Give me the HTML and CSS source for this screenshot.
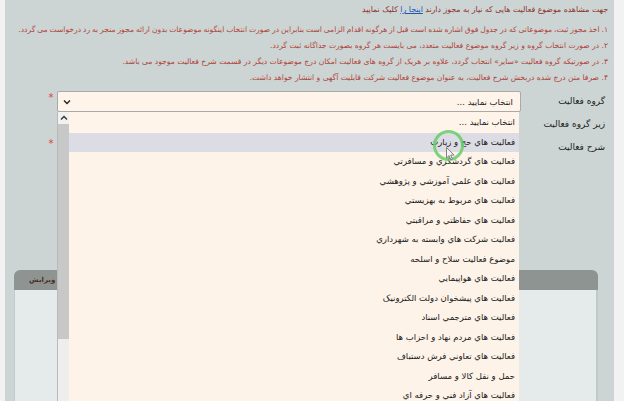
FILE: index.html
```html
<!DOCTYPE html>
<html lang="fa">
<head>
<meta charset="utf-8">
<title>ثبت موضوع فعالیت</title>
<link rel="stylesheet" href="styles.css">
</head>
<body>
<div class="page">
  <div class="panel" dir="rtl">
    <div class="notes">
      <p class="intro">جهت مشاهده موضوع فعالیت هایی که نیاز به مجوز دارند <a href="#">اینجا را</a> کلیک نمایید</p>
      <p class="rule rule-long">۱. اخذ مجوز ثبت، موضوعاتی که در جدول فوق اشاره شده است قبل از هرگونه اقدام الزامی است بنابراین در صورت انتخاب اینگونه موضوعات بدون ارائه مجوز منجر به رد درخواست می گردد.</p>
      <p class="rule">۲. در صورت انتخاب گروه و زیر گروه موضوع فعالیت متعدد، می بایست هر گروه بصورت جداگانه ثبت گردد.</p>
      <p class="rule">۳. در صورتیکه گروه فعالیت «سایر» انتخاب گردد، علاوه بر هریک از گروه های فعالیت امکان درج موضوعات دیگر در قسمت شرح فعالیت موجود می باشد.</p>
      <p class="rule">۴. صرفا متن درج شده دربخش شرح فعالیت، به عنوان موضوع فعالیت شرکت قابلیت آگهی و انتشار خواهد داشت.</p>
    </div>

    <div class="form">
      <div class="row">
        <label class="lbl">گروه فعالیت</label>
        <div class="field">
          <div class="select">
            <span class="sel-text">انتخاب نمایید ...</span>
            <svg class="chev" width="8" height="6" viewBox="0 0 8 6"><path d="M1 1.5 L4 4.5 L7 1.5" fill="none" stroke="#222" stroke-width="1.4"/></svg>
          </div>
          <div class="listbox">
            <ul class="options">
              <li>انتخاب نمایید ...</li>
              <li class="hover">فعالیت هاي حج و زیارت</li>
              <li>فعالیت هاي گردشگري و مسافرتي</li>
              <li>فعالیت هاي علمي آموزشي و پژوهشي</li>
              <li>فعالیت هاي مربوط به بهزیستي</li>
              <li>فعالیت هاي حفاظتي و مراقبتي</li>
              <li>فعالیت شرکت هاي وابسته به شهرداري</li>
              <li>موضوع فعالیت سلاح و اسلحه</li>
              <li>فعالیت هاي هواپیمایي</li>
              <li>فعالیت هاي پیشخوان دولت الکترونیک</li>
              <li>فعالیت هاي مترجمي اسناد</li>
              <li>فعالیت هاي مردم نهاد و احزاب ها</li>
              <li>فعالیت هاي تعاوني فرش دستباف</li>
              <li>حمل و نقل کالا و مسافر</li>
              <li>فعالیت هاي آزاد فني و حرفه اي</li>
            </ul>
            <div class="scrollbar">
              <div class="sb-btn"><svg width="8" height="6" viewBox="0 0 8 6"><path d="M1 4.5 L4 1.5 L7 4.5" fill="none" stroke="#333" stroke-width="1.3"/></svg></div>
              <div class="sb-thumb"></div>
              <div class="sb-track"></div>
            </div>
          </div>
        </div>
        <span class="req">*</span>
      </div>
      <div class="row">
        <label class="lbl">زیر گروه فعالیت</label>
        <div class="field"></div>
        <span class="req"></span>
      </div>
      <div class="row row-tall">
        <label class="lbl">شرح فعالیت</label>
        <div class="field"></div>
        <span class="req">*</span>
      </div>
    </div>

    <div class="card">
      <div class="card-head"><span class="col-edit">ویرایش</span></div>
      <div class="card-body"></div>
    </div>
  </div>

  <div class="pointer-ring"></div>
  <svg class="cursor" width="9" height="14" viewBox="0 0 9 14"><path d="M0.5 0.5 L0.5 11 L3 8.6 L4.8 12.8 L6.4 12.1 L4.7 8.1 L8 8.1 Z" fill="#f4f4f4" stroke="#777" stroke-width="0.9"/></svg>
</div>
</body>
</html>
```

FILE: styles.css
```css
* { box-sizing: border-box; }

html, body {
  margin: 0;
  padding: 0;
  height: 100%;
  overflow: hidden;
}

body {
  background: #f2f2f2;
  font-family: "DejaVu Sans", "Noto Sans", sans-serif;
  color: #222;
}

.page {
  position: relative;
  height: 401px;
  padding: 0 10px 0 5px;
}

.panel {
  background: #ccd5d4;
  height: 401px;
  display: flex;
  flex-direction: column;
  overflow: hidden;
}

/* notes */
.notes {
  padding: 2px 6px 0 6px;
}
.notes p {
  margin: 0;
  line-height: 16px;
  white-space: nowrap;
}
.intro {
  font-size: 7.8px;
  color: #8e2f2f;
  margin-bottom: 4px !important;
}
.intro a {
  color: #2457b5;
  text-decoration: underline;
}
.rule {
  font-size: 7.6px;
  color: #b1433a;
}
.rule-long {
  font-size: 7.6px;
  word-spacing: -0.5px;
}

/* form */
.form {
  margin-top: 5px;
  display: flex;
  flex-direction: column;
  gap: 1px;
}
.row {
  display: flex;
  align-items: flex-start;
  height: 22px;
}
.row-tall {
  height: 133px;
}
.lbl {
  width: 93px;
  flex: none;
  padding-right: 9px;
  font-size: 9px;
  line-height: 21px;
  color: #1e1e1e;
}
.field {
  width: 464px;
  flex: none;
  position: relative;
}
.req {
  width: 12px;
  flex: none;
  color: #e03b3b;
  font-size: 10px;
  line-height: 12px;
  text-align: center;
  padding-top: 1px;
}

.select {
  height: 21px;
  background: #fff4ea;
  border: 1px solid #a9a9a9;
  border-radius: 2px;
  display: flex;
  align-items: center;
  justify-content: space-between;
  padding: 0 7px 0 5px;
}
.sel-text {
  font-size: 8.5px;
  color: #1c1c1c;
}
.chev { display: block; }

/* open dropdown list (popup over the form) */
.listbox {
  position: absolute;
  top: 21px;
  right: 2px;
  width: 462px;
  height: 300px;
  background: #fdf3e9;
  border-left: 1px solid #b9b9b9;
  display: flex;
  z-index: 5;
}
.options {
  list-style: none;
  margin: 0;
  padding: 1px 0 0;
  flex: 1;
}
.options li {
  height: 19.5px;
  line-height: 19.5px;
  padding-right: 4px;
  font-size: 8.5px;
  color: #1a1a1a;
  white-space: nowrap;
}
.options li:first-child {
  background: #fff4ea;
}
.options li.hover {
  background: #dcdce5;
}
.scrollbar {
  width: 11px;
  flex: none;
  display: flex;
  flex-direction: column;
  background: #efefef;
}
.sb-btn {
  height: 12px;
  background: #f1f1f1;
  display: flex;
  align-items: center;
  justify-content: center;
}
.sb-btn svg { display: block; }
.sb-thumb {
  height: 215px;
  background: #c8c8c8;
}
.sb-track {
  flex: 1;
  background: #eeeeee;
}

/* card */
.card {
  margin: 0 16px 0 9px;
  flex: 1;
  display: flex;
  flex-direction: column;
}
.card-head {
  height: 20px;
  flex: none;
  background: #8e9492;
  border-radius: 6px 6px 0 0;
  display: flex;
  justify-content: flex-end;
  align-items: center;
  padding-left: 15px;
}
.col-edit {
  font-size: 7px;
  font-weight: bold;
  color: #4b2f24;
}
.card-body {
  flex: 1;
  background: #e4ebea;
  border-left: 1px solid #c3cbca;
  border-right: 2px solid #c2cac9;
}

/* mouse pointer highlight (overlay) */
.pointer-ring {
  position: absolute;
  left: 433px;
  top: 130px;
  width: 31px;
  height: 31px;
  border: 3px solid rgba(105, 205, 105, 0.85);
  border-radius: 50%;
  z-index: 10;
}
.cursor {
  position: absolute;
  left: 446px;
  top: 147px;
  z-index: 11;
}
```
